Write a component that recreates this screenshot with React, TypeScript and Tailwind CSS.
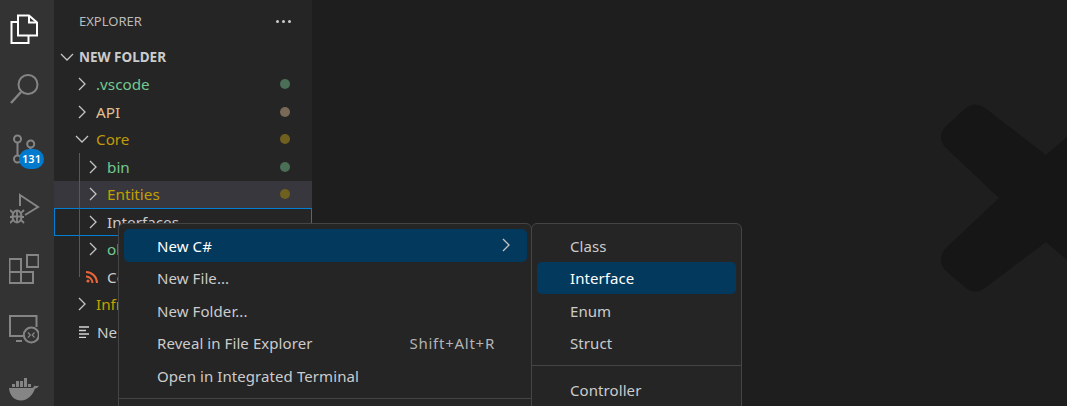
import React from "react";

const Chevron = ({ open, className = "" }: { open?: boolean; className?: string }) => (
  <svg width="20" height="20" viewBox="0 0 20 20" fill="none" stroke="#c5c5c5" strokeWidth="1.3" className={className}>
    {open ? <path d="M4 7l6 6 6-6" /> : <path d="M7 4l6 6-6 6" />}
  </svg>
);

const Files = () => (
  <svg width="30" height="32" viewBox="0 0 30 32" fill="none" stroke="#fff" strokeWidth="2">
    <path d="M8 2.500h11l8 7v13H8z" />
    <path d="M19 2.500v7h8" />
    <path d="M8 9H1.500v21h17v-7.500" />
  </svg>
);
const Search = () => (
  <svg width="30" height="30" viewBox="0 0 30 30" fill="none" stroke="#858585" strokeWidth="2">
    <circle cx="18" cy="10.500" r="9.500" />
    <path d="M11 18L1 29" strokeWidth="2.400" />
  </svg>
);
const Source = () => (
  <svg width="30" height="32" viewBox="0 0 30 32" fill="none" stroke="#858585" strokeWidth="2">
    <circle cx="7.500" cy="6" r="3.500" />
    <circle cx="7.500" cy="26" r="3.500" />
    <circle cx="20.700" cy="11" r="3.500" />
    <path d="M7.500 9.500v13M20.700 14.500c0 5-8 6-11 9" />
  </svg>
);
const Debug = () => (
  <svg width="30" height="34" viewBox="0 0 30 34" fill="none" stroke="#858585" strokeWidth="2">
    <path d="M10 14V3l18 12-13 8" />
    <ellipse cx="7" cy="24.500" rx="4.500" ry="6" />
    <path d="M0 18l3 3M14 18l-3 3M0 25h3M11 25h3M0 31l3-3M14 31l-3-3M3 24.500h8M7 19v11" strokeWidth="1.800" />
  </svg>
);
const Ext = () => (
  <svg width="30" height="30" viewBox="0 0 30 30" fill="none" stroke="#858585" strokeWidth="2">
    <path d="M.500 5h11.500v24H.500zM.500 18H24v11H12" />
    <rect x="18" y="1" width="11.500" height="12" />
  </svg>
);
const Remote = () => (
  <svg width="30" height="30" viewBox="0 0 30 30" fill="none" stroke="#858585" strokeWidth="2">
    <path d="M14 22H1V2h26.500v11" />
    <path d="M7 27h6" />
    <circle cx="22.300" cy="21" r="7.500" />
    <path d="M19 18.500l2.300 2.500-2.300 2.500M25.500 18.500L23.200 21l2.300 2.500" strokeWidth="1.200" />
  </svg>
);
const Docker = () => (
  <svg width="30" height="23" viewBox="0 0 30 23" fill="#858585">
    <path d="M0 10h23c1 0 2-1 2.500-2.500 1 .5 3 1 4.500 0-.5 1.500-2 3-4 3-2 6-7 12-14 12C5 22.500.500 17 0 10z" />
    <path d="M3 6h3v3H3zM7 6h3v3H7zM11 6h3v3h-3zM15 6h3v3h-3zM19 6h3v3h-3zM7 3h3v3H7zM11 3h3v3h-3zM15 3h3v3h-3zM15 0h3v3h-3z" />
  </svg>
);

const Rss = () => (
  <svg width="12" height="12" viewBox="0 0 12 12" fill="none" stroke="#e8663a" strokeWidth="2">
    <circle cx="2" cy="10" r="1.600" fill="#e8663a" stroke="none" />
    <path d="M0 5.500a6.500 6.500 0 016.500 6.500M0 1a11 11 0 0111 11" />
  </svg>
);
const Lines = () => (
  <svg width="12" height="12" viewBox="0 0 12 12" stroke="#d4d4d4" strokeWidth="1.500">
    <path d="M1 1h10M1 4.500h7M1 8h10M1 11.500h7" />
  </svg>
);

const Dot = ({ className }: { className: string }) => (
  <span className={`ml-auto mr-[22px] h-[10px] w-[10px] rounded-full ${className}`} />
);

const Row = ({
  children,
  className = "",
}: {
  children: React.ReactNode;
  className?: string;
}) => <div className={`flex h-[27.5px] items-center text-[15.25px] ${className}`}>{children}</div>;

const MenuItem = ({
  label,
  active,
  children,
}: {
  label: string;
  active?: boolean;
  children?: React.ReactNode;
}) => (
  <div
    className={`flex h-[32.5px] items-center justify-between rounded-[5px] pl-[33px] pr-[14px] text-[15px] tracking-[0.08px] whitespace-nowrap ${
      active ? "bg-[#04395e] text-white" : "text-[#cccccc]"
    }`}
  >
    <span className="pt-px">{label}</span>
    {children}
  </div>
);

const ActivityItem = ({ children, className = "pl-[10px]" }: { children: React.ReactNode; className?: string }) => (
  <div className={`relative flex h-[60px] shrink-0 items-center ${className}`}>{children}</div>
);

export default function App() {
  return (
    <div className="relative flex h-[406px] w-full overflow-hidden bg-[#1e1e1e] font-['Noto_Sans',sans-serif] text-[#cccccc]">
      <nav className="flex w-[54px] shrink-0 flex-col bg-[#333333] -mt-px">
        <ActivityItem><Files /></ActivityItem>
        <ActivityItem><Search /></ActivityItem>
        <ActivityItem>
          <Source />
          <span className="absolute left-[19px] top-[30px] flex h-[20px] w-[25px] items-center justify-center rounded-full bg-[#007acc] text-[11px] font-semibold text-white">
            131
          </span>
        </ActivityItem>
        <ActivityItem><Debug /></ActivityItem>
        <ActivityItem className="pl-[9px]"><Ext /></ActivityItem>
        <ActivityItem className="pl-[9px]"><Remote /></ActivityItem>
        <ActivityItem className="pl-[9px]"><Docker /></ActivityItem>
      </nav>

      <aside className="w-[258px] shrink-0 bg-[#252526]">
        <div className="flex h-[43px] items-center justify-between pl-[25px] pr-[21px] text-[13px] text-[#bbbbbb]">
          <span>EXPLORER</span>
          <span className="flex gap-[3px]">
            <i className="h-[3px] w-[3px] rounded-full bg-[#cccccc]" />
            <i className="h-[3px] w-[3px] rounded-full bg-[#cccccc]" />
            <i className="h-[3px] w-[3px] rounded-full bg-[#cccccc]" />
          </span>
        </div>
        <Row className="pl-[3px]">
          <Chevron open />
          <span className="ml-[2px] pt-px text-[13.5px] font-bold">NEW FOLDER</span>
        </Row>
        <Row className="pl-[18px] text-[#73c991]">
          <Chevron />
          <span className="ml-[4px] pt-px">.vscode</span>
          <Dot className="bg-[#4a6e56]" />
        </Row>
        <Row className="pl-[18px] text-[#e2c08d]">
          <Chevron />
          <span className="ml-[4px] pt-px">API</span>
          <Dot className="bg-[#786a57]" />
        </Row>
        <Row className="pl-[18px] text-[#c09a08]">
          <Chevron open />
          <span className="ml-[4px] pt-px">Core</span>
          <Dot className="bg-[#70601f]" />
        </Row>
        <div className="relative">
          <span className="absolute bottom-[14px] left-[25px] top-0 w-px bg-[#585858]" />
          <Row className="pl-[29px] text-[#73c991]">
            <Chevron />
            <span className="ml-[4px] pt-px">bin</span>
            <Dot className="bg-[#4a6e56]" />
          </Row>
          <Row className="bg-[#37373d] pl-[29px] text-[#c4a000]">
            <Chevron />
            <span className="ml-[4px] pt-px">Entities</span>
            <Dot className="bg-[#70601f]" />
          </Row>
          <Row className="border border-[#007fd4] pl-[28px]">
            <Chevron />
            <span className="ml-[4px] pt-px">Interfaces</span>
          </Row>
          <Row className="pl-[29px] text-[#73c991]">
            <Chevron />
            <span className="ml-[4px] pt-px">ob</span>
          </Row>
          <Row className="pl-[32px]">
            <Rss />
            <span className="ml-[9px] pt-px">Co</span>
          </Row>
        </div>
        <Row className="pl-[18px] text-[#c4a000]">
          <Chevron />
          <span className="ml-[4px] pt-px">Infr</span>
        </Row>
        <Row className="pl-[24px]">
          <Lines />
          <span className="ml-[7px] pt-px">Ne</span>
        </Row>
      </aside>

      <main className="relative flex-1">
        <svg width="755" height="406" viewBox="312 0 755 406" fill="#161616" className="absolute inset-0">
          <path d="M1067 137L1046 155 985 108Q975 101 966 108L945 127Q937 137 945 147L999 198 945 249Q937 260 945 270L966 288Q975 295 985 288L1046 242 1067 260Z" />
        </svg>
      </main>

      <div className="absolute left-[118px] top-[223px] h-[200px] w-[414px] rounded-[6px] border border-[#454545] bg-[#252526] py-[5px] pl-[5px] pr-[4px]">
        <MenuItem label="New C#" active>
          <Chevron className="-mr-[3px]" />
        </MenuItem>
        <MenuItem label="New File..." />
        <MenuItem label="New Folder..." />
        <MenuItem label="Reveal in File Explorer">
          <span className="pr-[18px] pt-px tracking-[0.75px] text-[#b4b4b4]">Shift+Alt+R</span>
        </MenuItem>
        <MenuItem label="Open in Integrated Terminal" />
        <div className="-ml-[5px] -mr-[4px] mt-[6px] h-px bg-[#454545]" />
      </div>

      <div className="absolute left-[531px] top-[223px] h-[200px] w-[211px] rounded-[6px] border border-[#454545] bg-[#252526] p-[5px]">
        <MenuItem label="Class" />
        <MenuItem label="Interface" active />
        <MenuItem label="Enum" />
        <MenuItem label="Struct" />
        <div className="-mx-[5px] mb-[7px] mt-[6px] h-px bg-[#454545]" />
        <MenuItem label="Controller" />
      </div>
    </div>
  );
}
